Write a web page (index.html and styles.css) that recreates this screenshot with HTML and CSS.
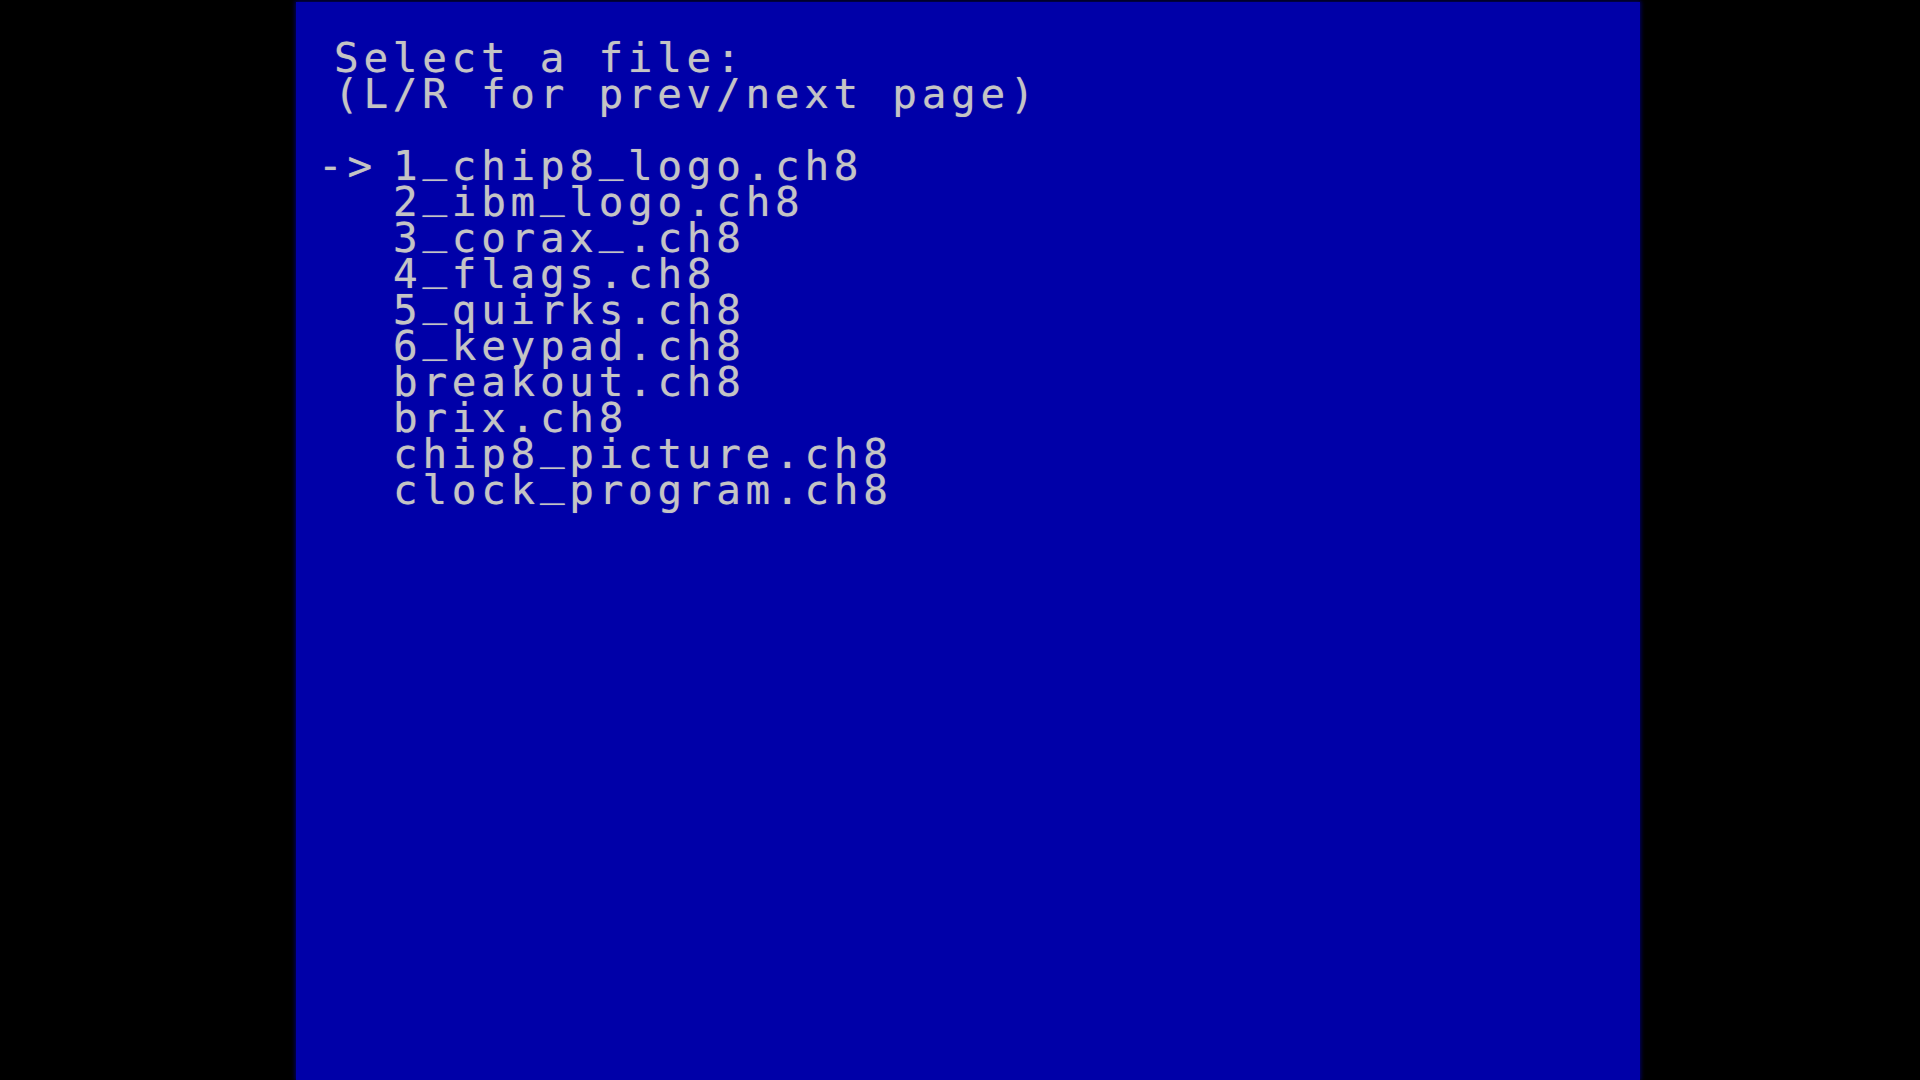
FILE: index.html
```html
<!DOCTYPE html>
<html>
<head>
<meta charset="utf-8">
<title>Select a file</title>
<link rel="stylesheet" href="styles.css">
</head>
<body>
<div class="screen">
  <div class="header">
    <div class="line">Select a file:</div>
    <div class="line">(L/R for prev/next page)</div>
    <div class="line blank"></div>
  </div>
  <ul class="files">
    <li class="row selected"><span class="marker">-&gt;</span><span class="name">1<span class="us">_</span>chip8<span class="us">_</span>logo.ch8</span></li>
    <li class="row"><span class="marker"></span><span class="name">2<span class="us">_</span>ibm<span class="us">_</span>logo.ch8</span></li>
    <li class="row"><span class="marker"></span><span class="name">3<span class="us">_</span>corax<span class="us">_</span>.ch8</span></li>
    <li class="row"><span class="marker"></span><span class="name">4<span class="us">_</span>flags.ch8</span></li>
    <li class="row"><span class="marker"></span><span class="name">5<span class="us">_</span>quirks.ch8</span></li>
    <li class="row"><span class="marker"></span><span class="name">6<span class="us">_</span>keypad.ch8</span></li>
    <li class="row"><span class="marker"></span><span class="name">breakout.ch8</span></li>
    <li class="row"><span class="marker"></span><span class="name">brix.ch8</span></li>
    <li class="row"><span class="marker"></span><span class="name">chip8<span class="us">_</span>picture.ch8</span></li>
    <li class="row"><span class="marker"></span><span class="name">clock<span class="us">_</span>program.ch8</span></li>
  </ul>
</div>
</body>
</html>
```
FILE: styles.css
```css
html, body {
  margin: 0;
  padding: 0;
  background: #000;
  width: 1920px;
  height: 1080px;
  overflow: hidden;
}

.screen {
  box-sizing: border-box;
  margin: 2px 0 0 296px;
  width: 1344px;
  height: 1078px;
  background: #0000a8;
  box-shadow: 0 0 4px 1px #00006a;
  padding-top: 38px;
  font-family: "DejaVu Sans Mono", monospace;
  font-size: 41px;
  line-height: 36px;
  letter-spacing: 4.7px;
  color: #c4c4c4;
  text-shadow: 0 0 1px rgba(200, 200, 220, 0.6);
}

.header {
  padding-left: 38px;
}

.line {
  height: 36px;
  white-space: pre;
}

.files {
  list-style: none;
  margin: 0;
  padding: 0 0 0 22px;
}

.row {
  display: flex;
  height: 36px;
  white-space: pre;
}

.marker {
  width: 75px;
  flex: none;
}

.name {
  flex: none;
}

.us {
  vertical-align: 9px;
  line-height: 0;
}
```
